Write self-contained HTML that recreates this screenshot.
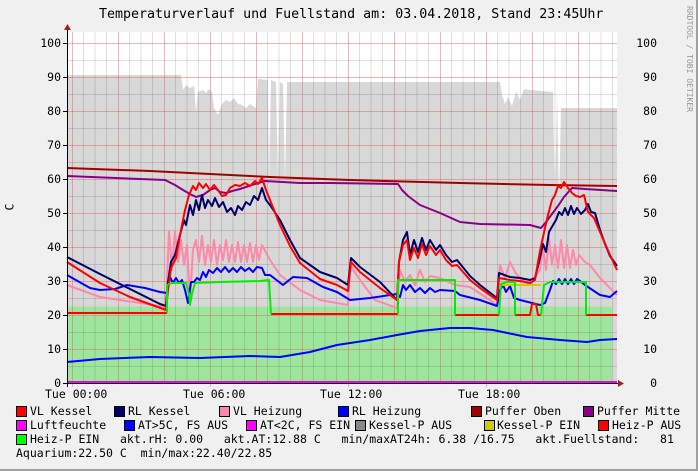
<!DOCTYPE html>
<html><head><meta charset="utf-8"><style>
body{margin:0;width:698px;height:471px;background:#f0f0f0;overflow:hidden;position:relative;font-family:"DejaVu Sans Mono","Liberation Mono",monospace;}
.t{position:absolute;white-space:pre;font-size:11.5px;color:#000;line-height:14px;}
.sw{position:absolute;width:9px;height:9px;border:1px solid #000;}
</style></head><body>
<div style="position:absolute;left:0;top:0;width:696px;height:469px;border-right:2px solid #a0a0a0;border-bottom:2px solid #a0a0a0;"></div>
<div class="t" style="left:99px;top:8px;font-size:13.3px;">Temperaturverlauf und Fuellstand am: 03.04.2018, Stand 23:45Uhr</div>
<div class="t" style="left:682px;top:6px;font-size:8px;color:#999;writing-mode:vertical-rl;">RRDTOOL / TOBI OETIKER</div>
<div class="t" style="left:6px;top:200px;transform:rotate(-90deg);">C</div>
<svg style="position:absolute;left:0;top:0" width="698" height="471">
<rect x="67" y="32" width="550" height="351" fill="#fff"/>
<path fill="#d8d8d8" d="M67,383 L67,75 L181,75 L183,90 L186,85 L190,88 L194,86 L196,112 L198,92 L203,90 L206,93 L209,89 L212,92 L214,108 L218,115 L222,104 L226,100 L230,102 L234,98 L238,104 L242,105 L246,108 L250,104 L256,108 L258,79 L268,80 L269,180 L271,80 L276,82 L278,180 L280,82 L283,84 L285,180 L287,82 L500,82 L502,95 L505,104 L508,97 L512,106 L516,92 L520,100 L524,89 L530,90 L553,92 L555,203 L557,92 L559,203 L561,108 L617,108 L617,383 Z"/>
<rect x="67" y="306.5" width="545" height="76.5" fill="#9ee69e"/>
<g stroke="#000" stroke-opacity="0.12" stroke-width="1">
<path d="M83.5,32V383M95,32V383M106.5,32V383M129.5,32V383M141,32V383M152.5,32V383M175.5,32V383M187,32V383M198.5,32V383M221.5,32V383M233,32V383M244.5,32V383M267.5,32V383M279,32V383M290.5,32V383M313.5,32V383M325,32V383M336.5,32V383M359.5,32V383M371,32V383M382.5,32V383M405.5,32V383M417,32V383M428.5,32V383M451.5,32V383M463,32V383M474.5,32V383M497.5,32V383M509,32V383M520.5,32V383M543.5,32V383M555,32V383M566.5,32V383M589.5,32V383M601,32V383M612.5,32V383"/>
<path d="M67,366.5H617M67,332.5H617M67,298.5H617M67,264.5H617M67,230.5H617M67,196.5H617M67,162.5H617M67,128.5H617M67,94.5H617M67,60.5H617"/>
</g>
<g stroke="#e06060" stroke-opacity="0.45" stroke-width="1">
<path d="M72.5,32V387M118.5,32V383M164.5,32V383M210.5,32V387M256.5,32V383M302.5,32V383M348.5,32V387M394.5,32V383M440.5,32V383M486.5,32V387M532.5,32V383M578.5,32V383"/>
<path d="M63,349.5H617M63,315.5H617M63,281.5H617M63,247.5H617M63,213.5H617M63,179.5H617M63,145.5H617M63,111.5H617M63,77.5H617M63,43.5H617"/>
</g>
<g fill="none" stroke-width="2" stroke-linejoin="round">
<polyline stroke="#ff88aa" points="67,285 100,297 140,303 166,307 169,231 172,270 175,231 178,262 181,240 184,265 187,245 190,300 193,250 196,240 199,262 202,236 205,265 208,245 211,262 214,240 217,265 220,245 223,260 226,240 229,262 232,245 235,262 238,242 241,262 244,245 247,262 250,243 253,262 256,245 259,260 262,245 270,260 280,275 300,290 320,300 348,305 350,265 360,280 375,300 397,308 400,270 405,282 410,275 415,285 420,270 425,282 430,276 440,278 455,285 470,287 490,300 497,305 500,265 505,278 510,262 515,272 520,278 530,285 540,270 543,248 546,270 549,238 552,265 555,245 558,268 561,240 564,268 567,245 570,268 573,250 576,265 579,255 585,262 590,265 600,278 617,295"/>
<polyline stroke="#0000ff" points="67,275 90,288 100,290 115,289 127,285 145,288 160,292 167,293 170,277 173,283 176,278 179,283 182,280 185,290 188,303 191,282 194,282 197,278 200,280 203,272 206,277 209,270 213,273 217,268 221,272 225,267 229,272 233,268 237,272 241,267 245,271 249,268 253,272 257,267 262,268 265,275 270,275 283,285 293,277 307,278 323,287 337,292 350,300 370,298 397,294 400,297 403,285 406,290 410,285 415,292 420,288 425,293 430,288 435,292 440,290 455,291 460,295 480,300 497,306 500,290 503,285 506,292 510,286 514,298 520,300 540,305 545,303 550,290 553,281 556,284 559,279 562,284 565,279 568,284 571,279 574,284 577,279 580,281 585,285 600,295 610,297 617,291"/>
<polyline stroke="#0000ff" points="67,362 100,359 150,357 200,358 250,356 280,357 310,352 337,345 370,340 397,335 420,331 450,328 470,328 493,330 527,337 560,340 587,342 600,340 617,339"/>
<polyline stroke="#a00000" points="67,168 150,171 230,175 270,177 350,180 460,183 550,185 617,186"/>
<polyline stroke="#880088" points="67,176 140,179 165,180 175,185 183,190 190,194 196,197 203,195 210,190 215,188 220,192 226,193 232,191 240,189 255,184 265,181 300,183 330,183 398,184 402,190 408,196 420,205 440,213 460,222 480,224 530,225 541,228 546,222 552,214 558,206 564,197 572,188 585,189 617,191"/>
<polyline stroke="#000066" points="67,257 100,274 130,289 160,304 166,306 168,282 171,262 175,255 180,235 184,220 186,225 190,205 193,215 196,200 199,210 202,195 205,208 208,200 212,206 215,198 219,207 223,202 227,212 231,208 235,215 238,206 242,210 246,202 250,205 254,196 258,200 262,188 266,200 270,205 280,220 290,240 300,258 320,272 337,278 348,285 351,258 360,267 380,282 397,300 399,262 403,240 407,232 410,255 414,240 418,252 422,238 426,250 430,240 436,250 440,245 446,255 452,262 457,260 470,276 480,285 497,298 499,273 510,277 520,278 530,280 535,278 539,262 543,244 546,252 549,232 553,225 556,220 559,212 562,215 565,208 568,215 571,206 574,214 577,208 581,214 585,210 588,204 591,212 595,213 600,230 605,244 610,256 617,266"/>
<polyline stroke="#ff0000" points="67,262 100,283 130,297 166,310 168,290 171,268 176,258 181,230 185,210 189,195 193,186 196,190 199,183 203,188 206,184 210,190 214,185 218,190 222,196 226,195 230,188 235,185 240,186 245,183 250,186 255,181 258,184 262,178 266,190 270,200 280,225 290,246 300,263 320,279 337,285 348,291 351,262 360,272 380,288 397,300 399,262 403,245 407,240 410,260 414,248 418,258 422,244 426,255 430,246 436,255 440,250 446,260 452,266 457,265 470,280 480,288 497,300 499,278 510,280 520,281 530,283 535,280 538,262 541,246 545,228 548,215 552,200 555,195 558,186 561,188 564,182 568,188 572,193 576,196 580,197 584,195 588,212 594,218 600,232 610,255 617,270"/>
<polyline stroke="#cccc00" points="500,285 541,285"/>
<polyline stroke="#ff0000" points="67,313 166,313 M0,0"/>
<path stroke="#ff0000" d="M67,313H167M271,314H398M455,315H499M515,315H530L532,304H536L538,315H541M586,315H617"/>
<path stroke="#00ee00" d="M167,313V285L172,283H186L189,294L190,305L192,294L195,283L220,282L260,281L269,280L271,314M398,314V280H455V315M499,315L501,284L507,282H515V315M541,315L544,285L550,282H586V315"/>
<path stroke="#ee00ee" d="M67,382H617"/>
</g>
<path stroke="#000" stroke-width="1" d="M67.5,28V387M63,383.5H620"/>
<path fill="#a02020" d="M64,30L67.5,24L71,30Z M618,380L624,383.5L618,387Z"/>
<path stroke="#000" stroke-width="1" d="M63,349.5H67M63,315.5H67M63,281.5H67M63,247.5H67M63,213.5H67M63,179.5H67M63,145.5H67M63,111.5H67M63,77.5H67M63,43.5H67"/>
</svg>
<div class="t" style="left:34px;top:376px;width:27px;text-align:right">0</div>
<div class="t" style="left:34px;top:342px;width:27px;text-align:right">10</div>
<div class="t" style="left:34px;top:308px;width:27px;text-align:right">20</div>
<div class="t" style="left:34px;top:274px;width:27px;text-align:right">30</div>
<div class="t" style="left:34px;top:240px;width:27px;text-align:right">40</div>
<div class="t" style="left:34px;top:206px;width:27px;text-align:right">50</div>
<div class="t" style="left:34px;top:172px;width:27px;text-align:right">60</div>
<div class="t" style="left:34px;top:138px;width:27px;text-align:right">70</div>
<div class="t" style="left:34px;top:104px;width:27px;text-align:right">80</div>
<div class="t" style="left:34px;top:70px;width:27px;text-align:right">90</div>
<div class="t" style="left:34px;top:36px;width:27px;text-align:right">100</div>
<div class="t" style="left:636px;top:376px;width:21px;text-align:right">0</div>
<div class="t" style="left:636px;top:342px;width:21px;text-align:right">10</div>
<div class="t" style="left:636px;top:308px;width:21px;text-align:right">20</div>
<div class="t" style="left:636px;top:274px;width:21px;text-align:right">30</div>
<div class="t" style="left:636px;top:240px;width:21px;text-align:right">40</div>
<div class="t" style="left:636px;top:206px;width:21px;text-align:right">50</div>
<div class="t" style="left:636px;top:172px;width:21px;text-align:right">60</div>
<div class="t" style="left:636px;top:138px;width:21px;text-align:right">70</div>
<div class="t" style="left:636px;top:104px;width:21px;text-align:right">80</div>
<div class="t" style="left:636px;top:70px;width:21px;text-align:right">90</div>
<div class="t" style="left:636px;top:36px;width:21px;text-align:right">100</div>
<div class="t" style="left:45px;top:387px;">Tue 00:00</div>
<div class="t" style="left:183px;top:387px;">Tue 06:00</div>
<div class="t" style="left:320px;top:387px;">Tue 12:00</div>
<div class="t" style="left:458px;top:387px;">Tue 18:00</div>
<div class="sw" style="left:16px;top:406px;background:#ff0000"></div><div class="t" style="left:30px;top:404px;">VL Kessel</div>
<div class="sw" style="left:114px;top:406px;background:#000066"></div><div class="t" style="left:128px;top:404px;">RL Kessel</div>
<div class="sw" style="left:219px;top:406px;background:#ff88aa"></div><div class="t" style="left:233px;top:404px;">VL Heizung</div>
<div class="sw" style="left:338px;top:406px;background:#0000ff"></div><div class="t" style="left:352px;top:404px;">RL Heizung</div>
<div class="sw" style="left:471px;top:406px;background:#a00000"></div><div class="t" style="left:485px;top:404px;">Puffer Oben</div>
<div class="sw" style="left:583px;top:406px;background:#880088"></div><div class="t" style="left:597px;top:404px;">Puffer Mitte</div>
<div class="sw" style="left:16px;top:420px;background:#ff00ff"></div><div class="t" style="left:30px;top:418px;">Luftfeuchte</div>
<div class="sw" style="left:124px;top:420px;background:#0000ff"></div><div class="t" style="left:138px;top:418px;">AT&gt;5C, FS AUS</div>
<div class="sw" style="left:246px;top:420px;background:#ff00ff"></div><div class="t" style="left:260px;top:418px;">AT&lt;2C, FS EIN</div>
<div class="sw" style="left:355px;top:420px;background:#888888"></div><div class="t" style="left:369px;top:418px;">Kessel-P AUS</div>
<div class="sw" style="left:484px;top:420px;background:#cccc00"></div><div class="t" style="left:497px;top:418px;">Kessel-P EIN</div>
<div class="sw" style="left:598px;top:420px;background:#ff0000"></div><div class="t" style="left:612px;top:418px;">Heiz-P AUS</div>
<div class="sw" style="left:16px;top:434px;background:#00ff00"></div><div class="t" style="left:30px;top:432px;">Heiz-P EIN   akt.rH: 0.00   akt.AT:12.88 C   min/maxAT24h: 6.38 /16.75   akt.Fuellstand:   81</div>
<div class="t" style="left:16px;top:446px;">Aquarium:22.50 C  min/max:22.40/22.85</div>
</body></html>
